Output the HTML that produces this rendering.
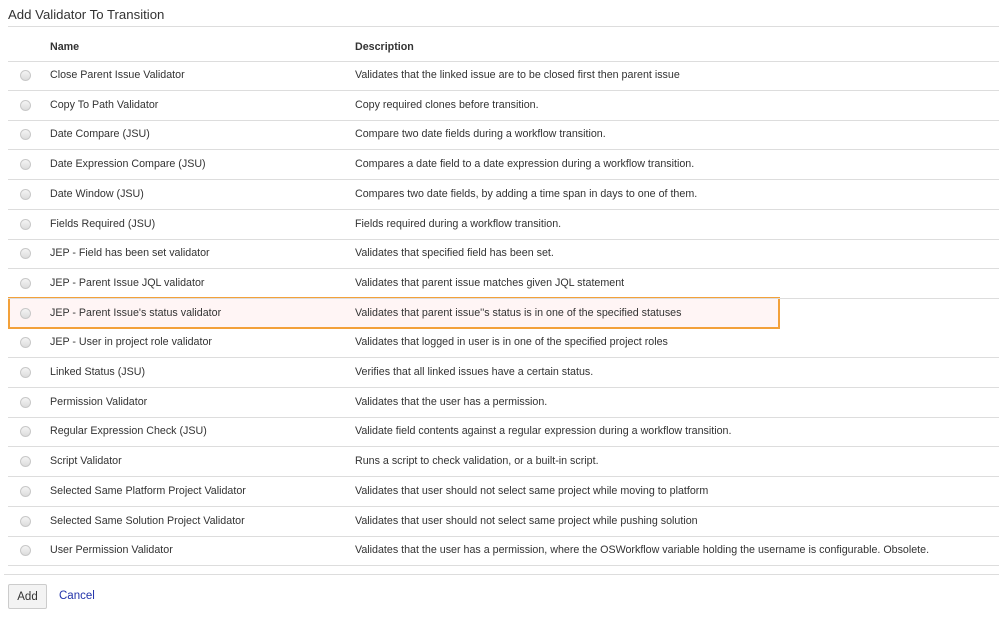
<!DOCTYPE html>
<html><head><style>
body{margin:0;width:999px;height:627px;background:#fff;font-family:"Liberation Sans",Arial,sans-serif;color:#333;font-size:10.7px;position:relative;overflow:hidden}
.t{position:absolute;left:8px;top:7px;font-size:13.2px;color:#333}
.hl{position:absolute;left:8px;right:0;height:0;border-top:1px solid #ddd}
.r{position:absolute;left:8px;right:0;height:29px;border-bottom:1px solid #ddd}
.r .n{position:absolute;left:42px;top:8px}
.r .d{position:absolute;left:347px;top:8px}
.r .rb{position:absolute;left:12px;top:9px;width:9px;height:9px;border-radius:50%;border:1px solid #c8c8c8;background:linear-gradient(#f4f4f4,#dcdcdc)}
.hi{position:absolute;left:8px;top:297px;width:768px;height:28px;border:2px solid #f3a13a;background:#fff5f5}
.btn{position:absolute;left:8px;top:584px;width:37px;height:23px;border:1px solid #ccc;border-radius:2px;background:#f3f3f3;text-align:center;line-height:24px;font-size:11.5px;color:#333}
.c{position:absolute;left:59px;top:590px;color:#2233aa;font-size:11.5px}
</style></head><body>
<div class="t">Add Validator To Transition</div>
<div class="hl" style="top:26px"></div>
<div style="position:absolute;left:50px;top:41px;font-weight:bold">Name</div>
<div style="position:absolute;left:355px;top:41px;font-weight:bold">Description</div>
<div class="hl" style="top:61px"></div>
<div class="hi"></div>
<div class="r" style="top:61px"><span class="rb"></span><span class="n">Close Parent Issue Validator</span><span class="d">Validates that the linked issue are to be closed first then parent issue</span></div>
<div class="r" style="top:90.7px"><span class="rb"></span><span class="n">Copy To Path Validator</span><span class="d">Copy required clones before transition.</span></div>
<div class="r" style="top:120.4px"><span class="rb"></span><span class="n">Date Compare (JSU)</span><span class="d">Compare two date fields during a workflow transition.</span></div>
<div class="r" style="top:150.1px"><span class="rb"></span><span class="n">Date Expression Compare (JSU)</span><span class="d">Compares a date field to a date expression during a workflow transition.</span></div>
<div class="r" style="top:179.8px"><span class="rb"></span><span class="n">Date Window (JSU)</span><span class="d">Compares two date fields, by adding a time span in days to one of them.</span></div>
<div class="r" style="top:209.5px"><span class="rb"></span><span class="n">Fields Required (JSU)</span><span class="d">Fields required during a workflow transition.</span></div>
<div class="r" style="top:239.2px"><span class="rb"></span><span class="n">JEP - Field has been set validator</span><span class="d">Validates that specified field has been set.</span></div>
<div class="r" style="top:268.9px"><span class="rb"></span><span class="n">JEP - Parent Issue JQL validator</span><span class="d">Validates that parent issue matches given JQL statement</span></div>
<div class="r" style="top:298.6px;border-bottom:none"><span class="rb"></span><span class="n">JEP - Parent Issue's status validator</span><span class="d">Validates that parent issue''s status is in one of the specified statuses</span></div>
<div class="r" style="top:328.3px"><span class="rb"></span><span class="n">JEP - User in project role validator</span><span class="d">Validates that logged in user is in one of the specified project roles</span></div>
<div class="r" style="top:358px"><span class="rb"></span><span class="n">Linked Status (JSU)</span><span class="d">Verifies that all linked issues have a certain status.</span></div>
<div class="r" style="top:387.7px"><span class="rb"></span><span class="n">Permission Validator</span><span class="d">Validates that the user has a permission.</span></div>
<div class="r" style="top:417.4px"><span class="rb"></span><span class="n">Regular Expression Check (JSU)</span><span class="d">Validate field contents against a regular expression during a workflow transition.</span></div>
<div class="r" style="top:447.1px"><span class="rb"></span><span class="n">Script Validator</span><span class="d">Runs a script to check validation, or a built-in script.</span></div>
<div class="r" style="top:476.8px"><span class="rb"></span><span class="n">Selected Same Platform Project Validator</span><span class="d">Validates that user should not select same project while moving to platform</span></div>
<div class="r" style="top:506.5px"><span class="rb"></span><span class="n">Selected Same Solution Project Validator</span><span class="d">Validates that user should not select same project while pushing solution</span></div>
<div class="r" style="top:536.2px"><span class="rb"></span><span class="n">User Permission Validator</span><span class="d">Validates that the user has a permission, where the OSWorkflow variable holding the username is configurable. Obsolete.</span></div>
<div class="hl" style="top:574px;left:4px"></div>
<div class="btn">Add</div>
<div class="c">Cancel</div>
</body></html>
